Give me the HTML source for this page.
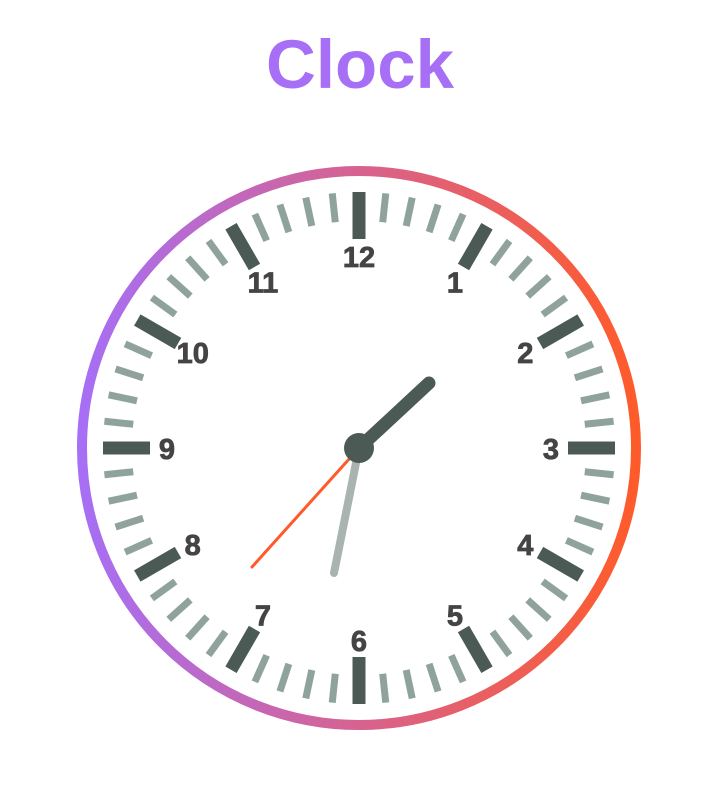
<!DOCTYPE html><html><head><style>body{margin:0;background:#fff;width:715px;height:784px;overflow:hidden}</style></head><body>
<svg width="715" height="784" xmlns="http://www.w3.org/2000/svg">
<defs><linearGradient id="g" x1="0" x2="1" y1="0" y2="0"><stop offset="0" stop-color="#a66ff5"/><stop offset="0.5" stop-color="#d7628f"/><stop offset="1" stop-color="#ff5b2a"/></linearGradient></defs>
<text x="360" y="88" text-anchor="middle" font-family="Liberation Sans" font-weight="bold" font-size="69" fill="#a66ff5">Clock</text>
<circle cx="359" cy="448" r="277" fill="#fff" stroke="url(#g)" stroke-width="10"/>
<g id="t"></g>
<g font-family="Liberation Sans" font-weight="bold" font-size="29" fill="#444" stroke="#444" stroke-width="0.8" text-anchor="middle" id="n"></g>
<line x1="359" y1="448" x2="429" y2="383" stroke="#4b5a55" stroke-width="13" stroke-linecap="round"/>
<line x1="359" y1="448" x2="334" y2="573" stroke="#a9b4b1" stroke-width="8" stroke-linecap="round"/>
<line x1="359" y1="448" x2="252" y2="567" stroke="#ff5a2a" stroke-width="3" stroke-linecap="round"/>
<circle cx="359" cy="448" r="15" fill="#4b5a55"/>
</svg>
<script>
var t=document.getElementById('t'),n=document.getElementById('n'),s='';
for(var i=0;i<60;i++){var a=i*6*Math.PI/180,sn=Math.sin(a),cs=-Math.cos(a),h=i%5==0;
var r1=h?209:227,r2=256;
s+='<line x1="'+(359+sn*r1)+'" y1="'+(448+cs*r1)+'" x2="'+(359+sn*r2)+'" y2="'+(448+cs*r2)+'" stroke="'+(h?'#4b5a55':'#8fa39c')+'" stroke-width="'+(h?13:7)+'"/>';}
t.innerHTML=s;s='';
for(var k=1;k<=12;k++){var a=k*30*Math.PI/180;s+='<text x="'+(359+Math.sin(a)*192)+'" y="'+(448-Math.cos(a)*192+11)+'">'+k+'</text>';}
n.innerHTML=s;
</script>
</body></html>
